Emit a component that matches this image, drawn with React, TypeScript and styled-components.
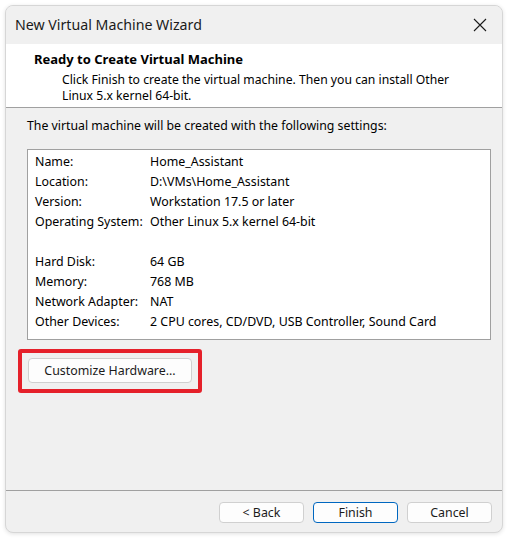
import styled, { createGlobalStyle } from "styled-components";

const GlobalStyle = createGlobalStyle`
  html, body {
    margin: 0;
    padding: 0;
    background: #ffffff;
  }
  body {
    font-family: "Segoe UI", "Noto Sans", "Liberation Sans", sans-serif;
    color: #000;
  }
`;

const settings: Array<[string, string] | null> = [
  ["Name:", "Home_Assistant"],
  ["Location:", "D:\\VMs\\Home_Assistant"],
  ["Version:", "Workstation 17.5 or later"],
  ["Operating System:", "Other Linux 5.x kernel 64-bit"],
  null,
  ["Hard Disk:", "64 GB"],
  ["Memory:", "768 MB"],
  ["Network Adapter:", "NAT"],
  ["Other Devices:", "2 CPU cores, CD/DVD, USB Controller, Sound Card"],
];

function CloseIcon() {
  return (
    <svg width="14" height="14" viewBox="0 0 14 14">
      <path d="M1 1 L13 13 M13 1 L1 13" stroke="#1a1a1a" strokeWidth="1.1" fill="none" />
    </svg>
  );
}

function App() {
  return (
    <>
      <GlobalStyle />
      <S.Window>
        <S.TitleBar>
          <S.Title>New Virtual Machine Wizard</S.Title>
          <S.CloseButton>
            <CloseIcon />
          </S.CloseButton>
        </S.TitleBar>

        <S.Header>
          <S.HeaderTitle>Ready to Create Virtual Machine</S.HeaderTitle>
          <S.HeaderText>
            Click Finish to create the virtual machine. Then you can install Other
            <br />
            Linux 5.x kernel 64-bit.
          </S.HeaderText>
        </S.Header>

        <S.Body>
          <S.Intro>The virtual machine will be created with the following settings:</S.Intro>
          <S.SummaryBox>
            {settings.map((row, i) =>
              row ? (
                <S.Row key={i}>
                  <S.Label>{row[0]}</S.Label>
                  <S.Value>{row[1]}</S.Value>
                </S.Row>
              ) : (
                <S.Row key={i} />
              )
            )}
          </S.SummaryBox>
          <S.Highlight>
            <S.Button>Customize Hardware...</S.Button>
          </S.Highlight>
        </S.Body>

        <S.Footer>
          <S.Button $wide>&lt; Back</S.Button>
          <S.Button $wide $primary>
            Finish
          </S.Button>
          <S.Button $wide>Cancel</S.Button>
        </S.Footer>
      </S.Window>
    </>
  );
}

export default App;

const S = {
  Window: styled.div`
    margin: 5px;
    width: 498px;
    height: 528px;
    box-sizing: border-box;
    display: flex;
    flex-direction: column;
    background: #f0f0f0;
    border: 1px solid #d6d6d6;
    border-radius: 8px;
    box-shadow: 0 1px 4px rgba(0, 0, 0, 0.12);
    overflow: hidden;
  `,

  TitleBar: styled.div`
    height: 38px;
    flex-shrink: 0;
    display: flex;
    align-items: center;
    justify-content: space-between;
    padding: 0 14px 0 9px;
    background: #f0f0f0;
  `,

  Title: styled.div`
    font-size: 14.2px;
    color: #1b1b1b;
    padding-bottom: 1px;
  `,

  CloseButton: styled.div`
    display: flex;
    align-items: center;
    justify-content: center;
    width: 16px;
    height: 16px;
  `,

  Header: styled.div`
    height: 64px;
    flex-shrink: 0;
    box-sizing: border-box;
    background: #ffffff;
    border-bottom: 1px solid #a0a0a0;
    padding: 5px 0 0 28px;
  `,

  HeaderTitle: styled.div`
    font-size: 13px;
    font-weight: 700;
    line-height: 20px;
  `,

  HeaderText: styled.div`
    font-size: 12.2px;
    line-height: 16px;
    padding-left: 28px;
    margin-top: 3px;
  `,

  Body: styled.div`
    flex: 1;
    display: flex;
    flex-direction: column;
    align-items: flex-start;
    padding: 9px 11px 0 21px;
    border-bottom: 1px solid #a0a0a0;
  `,

  Intro: styled.div`
    font-size: 12.3px;
    line-height: 18px;
    margin-bottom: 14px;
  `,

  SummaryBox: styled.div`
    align-self: stretch;
    height: 191px;
    box-sizing: border-box;
    background: #ffffff;
    border: 1px solid #a0a0a0;
    padding: 1px 8px 8px 7px;
  `,

  Row: styled.div`
    display: flex;
    height: 20px;
    align-items: center;
    font-size: 12.4px;
  `,

  Label: styled.div`
    width: 115px;
    flex-shrink: 0;
  `,

  Value: styled.div`
    white-space: nowrap;
  `,

  Highlight: styled.div`
    margin: 9px 0 0 -9px;
    padding: 5px 6px 6px 6px;
    border: 4px solid #e5202a;
    border-radius: 3px;
  `,

  Button: styled.button<{ $wide?: boolean; $primary?: boolean }>`
    box-sizing: border-box;
    height: ${({ $wide }) => ($wide ? "21px" : "25px")};
    width: ${({ $wide }) => ($wide ? "85px" : "164px")};
    padding: 0;
    font-family: inherit;
    font-size: 12.4px;
    color: #1b1b1b;
    background: #fdfdfd;
    border: 1px solid ${({ $primary }) => ($primary ? "#0067c0" : "#d0d0d0")};
    border-radius: 4px;
    display: flex;
    align-items: center;
    justify-content: center;
  `,

  Footer: styled.div`
    height: 41px;
    flex-shrink: 0;
    box-sizing: border-box;
    display: flex;
    justify-content: flex-end;
    gap: 9px;
    padding: 11px 10px 0 0;
  `,
};
